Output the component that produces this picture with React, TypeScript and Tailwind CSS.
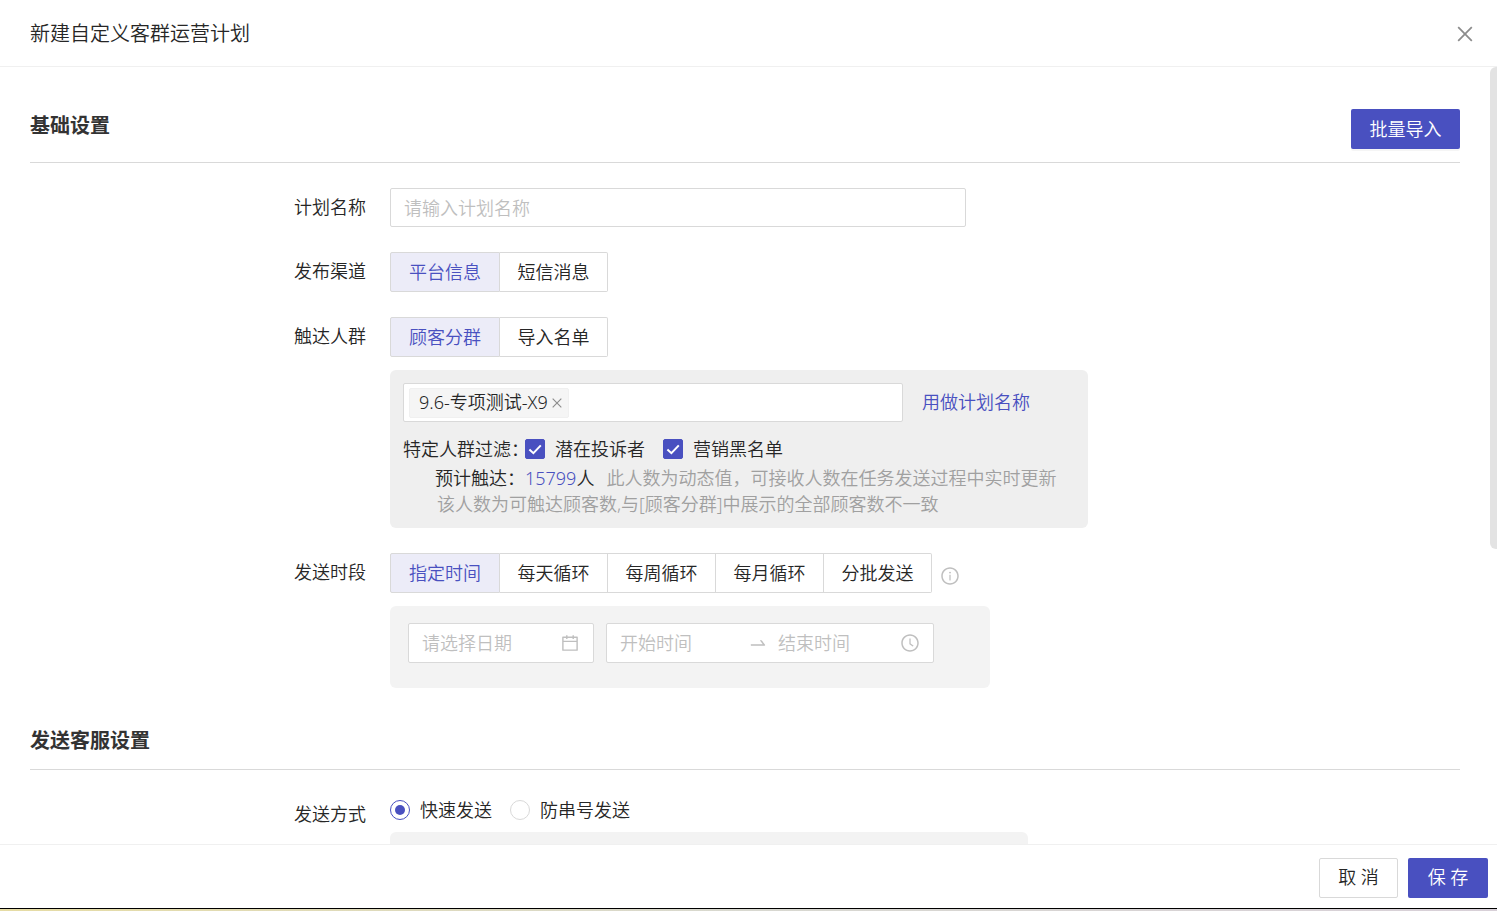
import { useState } from 'react';
import type { ReactNode, UIEvent } from 'react';
import {
  AiOutlineCalendar,
  AiOutlineClockCircle,
  AiOutlineClose,
  AiOutlineInfoCircle,
  AiOutlineSwapRight,
} from 'react-icons/ai';

const channels = ['平台信息', '短信消息'];
const audiences = ['顾客分群', '导入名单'];
const periods = ['指定时间', '每天循环', '每周循环', '每月循环', '分批发送'];
const sendModes = ['快速发送', '防串号发送'];

function FormRow({ label, htmlFor, children }: { label: string; htmlFor?: string; children: ReactNode }) {
  return (
    <div className="flex gap-6">
      <label htmlFor={htmlFor} className="w-84 shrink-0 text-right leading-[38px]">
        {label}
      </label>
      <div className="min-w-0 flex-1">{children}</div>
    </div>
  );
}

function Segmented({ name, options }: { name: string; options: string[] }) {
  const [value, setValue] = useState(options[0]);

  return (
    <div role="radiogroup" aria-label={name} className="flex h-10">
      {options.map((option) => (
        <label
          key={option}
          className="flex w-[108px] cursor-pointer items-center justify-center border border-l-0 border-[#d9d9d9] bg-white first:w-[110px] first:rounded-l-xs first:border-l last:rounded-r-xs hover:text-[#4950c0] has-checked:bg-[#ececf8] has-checked:text-[#4950c0]"
        >
          <input
            type="radio"
            name={name}
            checked={value === option}
            onChange={() => setValue(option)}
            className="sr-only"
          />
          {option}
        </label>
      ))}
    </div>
  );
}

function Checkbox({ label }: { label: string }) {
  return (
    <label className="flex cursor-pointer items-center gap-2.5">
      <span className="grid size-5">
        <input
          type="checkbox"
          defaultChecked
          className="peer col-start-1 row-start-1 size-5 appearance-none rounded-xs border border-[#d9d9d9] bg-white checked:border-[#4950c0] checked:bg-[#4950c0]"
        />
        <svg
          viewBox="0 0 20 20"
          fill="none"
          className="pointer-events-none invisible col-start-1 row-start-1 size-5 peer-checked:visible"
        >
          <path d="M4.4 10.4 L8.4 14.2 L15.8 6.4" stroke="#fff" strokeWidth="2" />
        </svg>
      </span>
      {label}
    </label>
  );
}

export default function App() {
  const [mode, setMode] = useState(sendModes[0]);
  const [tags, setTags] = useState(['9.6-专项测试-X9']);
  const [planName, setPlanName] = useState('');
  const [thumbTop, setThumbTop] = useState(0);

  const onScroll = (e: UIEvent<HTMLElement>) => {
    const el = e.currentTarget;
    setThumbTop((el.scrollTop / el.scrollHeight) * el.clientHeight);
  };

  return (
    <div className="flex h-screen flex-col bg-white font-['Noto_Sans','Noto_Sans_CJK_SC',sans-serif] text-[18px] font-[350] text-[#262626]">
      <header className="flex h-[67px] shrink-0 items-center justify-between border-b border-[#f0f0f0] pt-0.5 pr-[21px] pl-[30px]">
        <h1 className="text-[20px] leading-8">新建自定义客群运营计划</h1>
        <button type="button" aria-label="关闭" className="text-[#8c8c8c] hover:text-[#262626]">
          <AiOutlineClose size={22} />
        </button>
      </header>

      <div className="relative min-h-0 flex-1">
        <main onScroll={onScroll} className="h-full overflow-y-auto pr-[37px] pl-[30px] [scrollbar-width:none]">
          <section className="pt-[42px]">
            <div className="flex items-start justify-between border-b border-[#d9d9d9] pb-[13px]">
              <h2 className="text-[20px] leading-[34px] font-bold text-[#333]">基础设置</h2>
              <button
                type="button"
                className="h-10 w-[109px] rounded-xs bg-[#4950c0] text-white shadow-[0_2px_0_rgba(0,0,0,0.04)] hover:bg-[#6d73d0]"
              >
                批量导入
              </button>
            </div>

            <div className="flex flex-col gap-[25px] pt-[25px]">
              <FormRow label="计划名称" htmlFor="plan-name">
                <input
                  id="plan-name"
                  value={planName}
                  onChange={(e) => setPlanName(e.target.value)}
                  placeholder="请输入计划名称"
                  className="block h-[39px] w-full max-w-xl rounded-xs border border-[#d9d9d9] px-[13px] outline-none placeholder:text-[#bfbfbf] focus:border-[#4950c0]"
                />
              </FormRow>

              <FormRow label="发布渠道">
                <Segmented name="发布渠道" options={channels} />
              </FormRow>

              <FormRow label="触达人群">
                <Segmented name="触达人群" options={audiences} />
                <div className="mt-[13px] max-w-[698px] rounded-md bg-[#efefef] px-[13px] pt-[13px] pb-[11px]">
                  <div className="flex items-center gap-[19px]">
                    <div className="flex h-[39px] w-[500px] items-center rounded-xs border border-[#d9d9d9] bg-white pl-[5px]">
                      {tags.map((tag) => (
                        <span
                          key={tag}
                          className="flex h-[30px] items-center gap-0.5 rounded-xs border border-[#f0f0f0] bg-[#f5f5f5] pr-1 pl-[9px]"
                        >
                          {tag}
                          <button
                            type="button"
                            aria-label="移除"
                            onClick={() => setTags(tags.filter((t) => t !== tag))}
                            className="text-[#8c8c8c]"
                          >
                            <AiOutlineClose size={14} />
                          </button>
                        </span>
                      ))}
                      <input aria-label="选择顾客分群" className="h-full min-w-0 flex-1 px-1 outline-none" />
                    </div>
                    <button
                      type="button"
                      onClick={() => setPlanName(tags[0] ?? '')}
                      className="text-[#4950c0] hover:text-[#6d73d0]"
                    >
                      用做计划名称
                    </button>
                  </div>

                  <div className="mt-[11px] flex h-8 items-center whitespace-nowrap">
                    <span className="w-[122px] shrink-0">特定人群过滤：</span>
                    <div className="flex gap-[18px]">
                      <Checkbox label="潜在投诉者" />
                      <Checkbox label="营销黑名单" />
                    </div>
                  </div>

                  <div className="flex leading-[26px] whitespace-nowrap">
                    <span className="w-[122px] shrink-0 text-right">预计触达：</span>
                    <span className="text-[#4950c0]">15799</span>人
                    <span className="ml-3 text-[#a0a0a0]">此人数为动态值，可接收人数在任务发送过程中实时更新</span>
                  </div>
                  <p className="pl-[34px] leading-[26px] whitespace-nowrap text-[#a0a0a0]">
                    该人数为可触达顾客数,与[顾客分群]中展示的全部顾客数不一致
                  </p>
                </div>
              </FormRow>

              <FormRow label="发送时段">
                <div className="flex items-center gap-2">
                  <Segmented name="发送时段" options={periods} />
                  <AiOutlineInfoCircle size={20} className="mt-1.5 text-[#bfbfbf]" />
                </div>
                <div className="mt-[13px] flex max-w-[600px] gap-3 rounded-md bg-[#f3f3f3] px-[18px] pt-[17px] pb-[25px]">
                  <div className="flex h-10 w-[186px] items-center rounded-xs border border-[#d9d9d9] bg-white pr-[13px] pl-[13px] text-[#bfbfbf]">
                    <input
                      aria-label="日期"
                      placeholder="请选择日期"
                      className="min-w-0 flex-1 text-[#262626] outline-none placeholder:text-[#bfbfbf]"
                    />
                    <AiOutlineCalendar size={20} />
                  </div>
                  <div className="flex h-10 w-[328px] items-center rounded-xs border border-[#d9d9d9] bg-white pr-[13px] pl-[13px] text-[#bfbfbf]">
                    <input
                      aria-label="开始时间"
                      placeholder="开始时间"
                      className="w-32 text-[#262626] outline-none placeholder:text-[#bfbfbf]"
                    />
                    <AiOutlineSwapRight size={20} className="shrink-0" />
                    <input
                      aria-label="结束时间"
                      placeholder="结束时间"
                      className="ml-2.5 min-w-0 flex-1 text-[#262626] outline-none placeholder:text-[#bfbfbf]"
                    />
                    <AiOutlineClockCircle size={20} />
                  </div>
                </div>
              </FormRow>
            </div>
          </section>

          <section className="pt-9 pb-8">
            <h2 className="border-b border-[#d9d9d9] pb-[11px] text-[20px] leading-[34px] font-bold text-[#333]">
              发送客服设置
            </h2>
            <div className="pt-[25px]">
              <FormRow label="发送方式">
                <div role="radiogroup" aria-label="发送方式" className="flex h-[30px] items-center gap-[18px]">
                  {sendModes.map((m) => (
                    <label key={m} className="flex cursor-pointer items-center gap-2.5">
                      <span className="grid size-5 place-items-center">
                        <input
                          type="radio"
                          name="send-mode"
                          checked={mode === m}
                          onChange={() => setMode(m)}
                          className="peer col-start-1 row-start-1 size-5 appearance-none rounded-full border border-[#d9d9d9] bg-white checked:border-[#4950c0]"
                        />
                        <span className="pointer-events-none invisible col-start-1 row-start-1 size-2.5 rounded-full bg-[#4950c0] peer-checked:visible" />
                      </span>
                      {m}
                    </label>
                  ))}
                </div>
                <div className="mt-[7px] h-[460px] max-w-[638px] rounded-md bg-[#f3f3f3]" />
              </FormRow>
            </div>
          </section>
        </main>

        <div className="pointer-events-none absolute inset-y-0 right-0 w-[7px]">
          <div className="relative h-[62%] rounded-l-md bg-[#e3e3e3]" style={{ top: thumbTop }} />
        </div>
      </div>

      <footer className="flex h-16 shrink-0 items-center justify-end gap-2.5 border-t border-[#f0f0f0] pt-0.5 pr-[9px]">
        <button
          type="button"
          className="h-10 w-[79px] rounded-xs border border-[#d9d9d9] hover:border-[#4950c0] hover:text-[#4950c0]"
        >
          取 消
        </button>
        <button type="button" className="h-10 w-20 rounded-xs bg-[#4950c0] text-white hover:bg-[#6d73d0]">
          保 存
        </button>
      </footer>
      <div className="h-[3px] shrink-0 border-t border-black bg-linear-to-r from-[#e6dca4] via-[#d8d8d0] to-[#d8d0d8]" />
    </div>
  );
}
